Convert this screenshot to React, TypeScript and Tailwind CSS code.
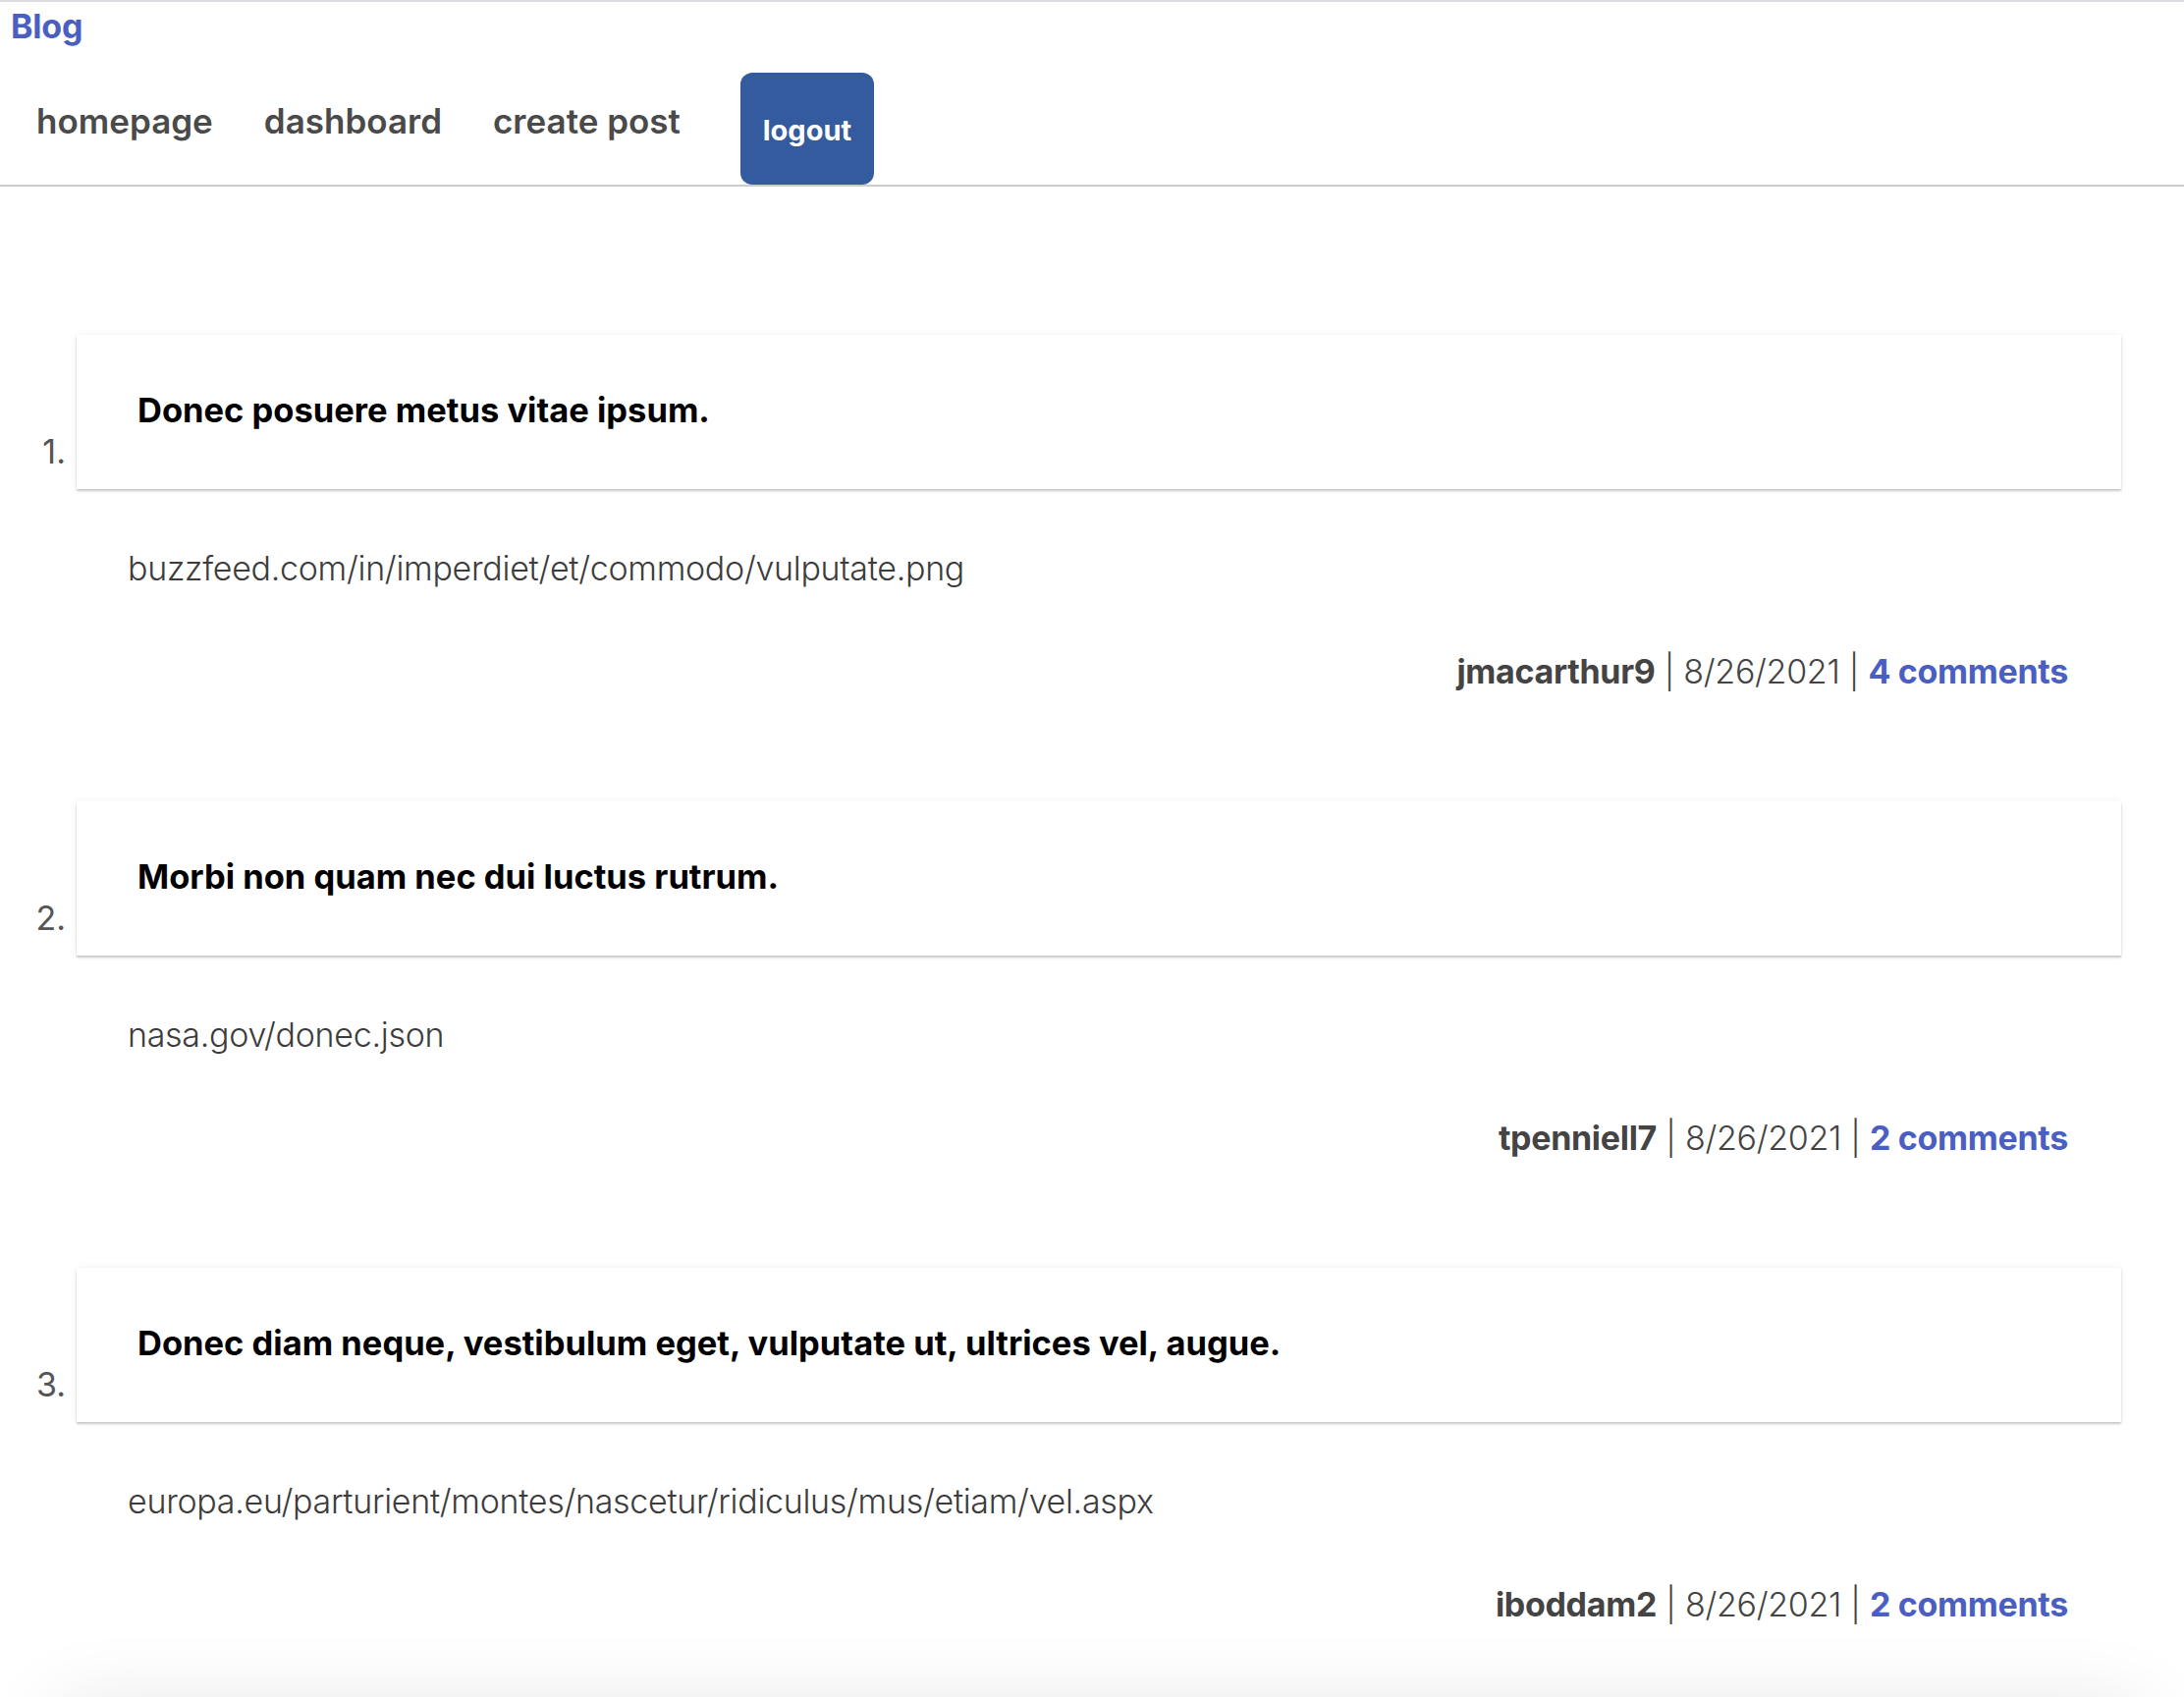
import React from "react";

const posts = [
  {
    title: "Donec posuere metus vitae ipsum.",
    url: "buzzfeed.com/in/imperdiet/et/commodo/vulputate.png",
    user: "jmacarthur9",
    date: "8/26/2021",
    comments: "4 comments",
  },
  {
    title: "Morbi non quam nec dui luctus rutrum.",
    url: "nasa.gov/donec.json",
    user: "tpenniell7",
    date: "8/26/2021",
    comments: "2 comments",
  },
  {
    title: "Donec diam neque, vestibulum eget, vulputate ut, ultrices vel, augue.",
    url: "europa.eu/parturient/montes/nascetur/ridiculus/mus/etiam/vel.aspx",
    user: "iboddam2",
    date: "8/26/2021",
    comments: "2 comments",
  },
];

export default function App() {
  return (
    <div
      className="min-h-screen bg-white border-t-2 border-[#dcdce0] overflow-hidden"
      style={{ fontFamily: "Inter, 'Noto Sans', sans-serif" }}
    >
      <header className="border-b-2 border-[#cccccc]">
        <h1 className="pl-[11px] pt-[5px] text-[34px] leading-[40px] font-bold text-[#4a5fc1] tracking-[-0.2px]">
          Blog
        </h1>
        <nav className="flex items-end pl-[11px] pt-[27px]">
          <a className="px-[26px] pb-[45px] text-[35px] leading-[40px] font-semibold text-[#4a4a4a]">
            homepage
          </a>
          <a className="px-[26px] pb-[45px] text-[35px] leading-[40px] font-semibold text-[#4a4a4a]">
            dashboard
          </a>
          <a className="px-[26px] pb-[45px] text-[35px] leading-[40px] font-semibold text-[#4a4a4a]">
            create post
          </a>
          <button className="ml-[35px] w-[136px] h-[114px] rounded-[12px] bg-[#335b9e] text-white text-[29px] font-bold flex items-center justify-center pt-[4px]">
            logout
          </button>
        </nav>
      </header>

      <ol className="pt-[151px]">
        {posts.map((p, i) => (
          <li key={i} className="flex flex-col pb-[112px]">
            <div className="flex">
              <div className="w-[78px] shrink-0 flex items-end justify-end pr-[11px] pb-[18px] text-[34px] leading-[40px] text-[#555555]">
                {i + 1}.
              </div>
              <div className="flex-1 mr-[64px] h-[157px] bg-white flex items-center pl-[62px] pb-[3px] shadow-[0_2px_2px_rgba(0,0,0,0.2),0_0_8px_rgba(0,0,0,0.06)]">
                <h2 className="text-[34.5px] leading-[40px] font-bold text-black">
                  {p.title}
                </h2>
              </div>
            </div>
            <p className="pl-[130px] pt-[61px] text-[34px] leading-[40px] font-light text-[#3c3c3c] tracking-[-0.3px]">
              {p.url}
            </p>
            <div className="flex justify-end pr-[118px] pt-[65px] text-[34px] leading-[40px] text-[#444444] tracking-[-0.3px]">
              <span className="font-bold">{p.user}</span>
              <span className="whitespace-pre font-light"> | {p.date} | </span>
              <a className="font-bold text-[#4a5fc1]">{p.comments}</a>
            </div>
          </li>
        ))}
      </ol>
      <div className="flex">
        <div className="w-[78px] shrink-0" />
        <div className="flex-1 mr-[64px] h-[157px] bg-white shadow-[0_-10px_80px_20px_rgba(0,0,0,0.1)]" />
      </div>
    </div>
  );
}
